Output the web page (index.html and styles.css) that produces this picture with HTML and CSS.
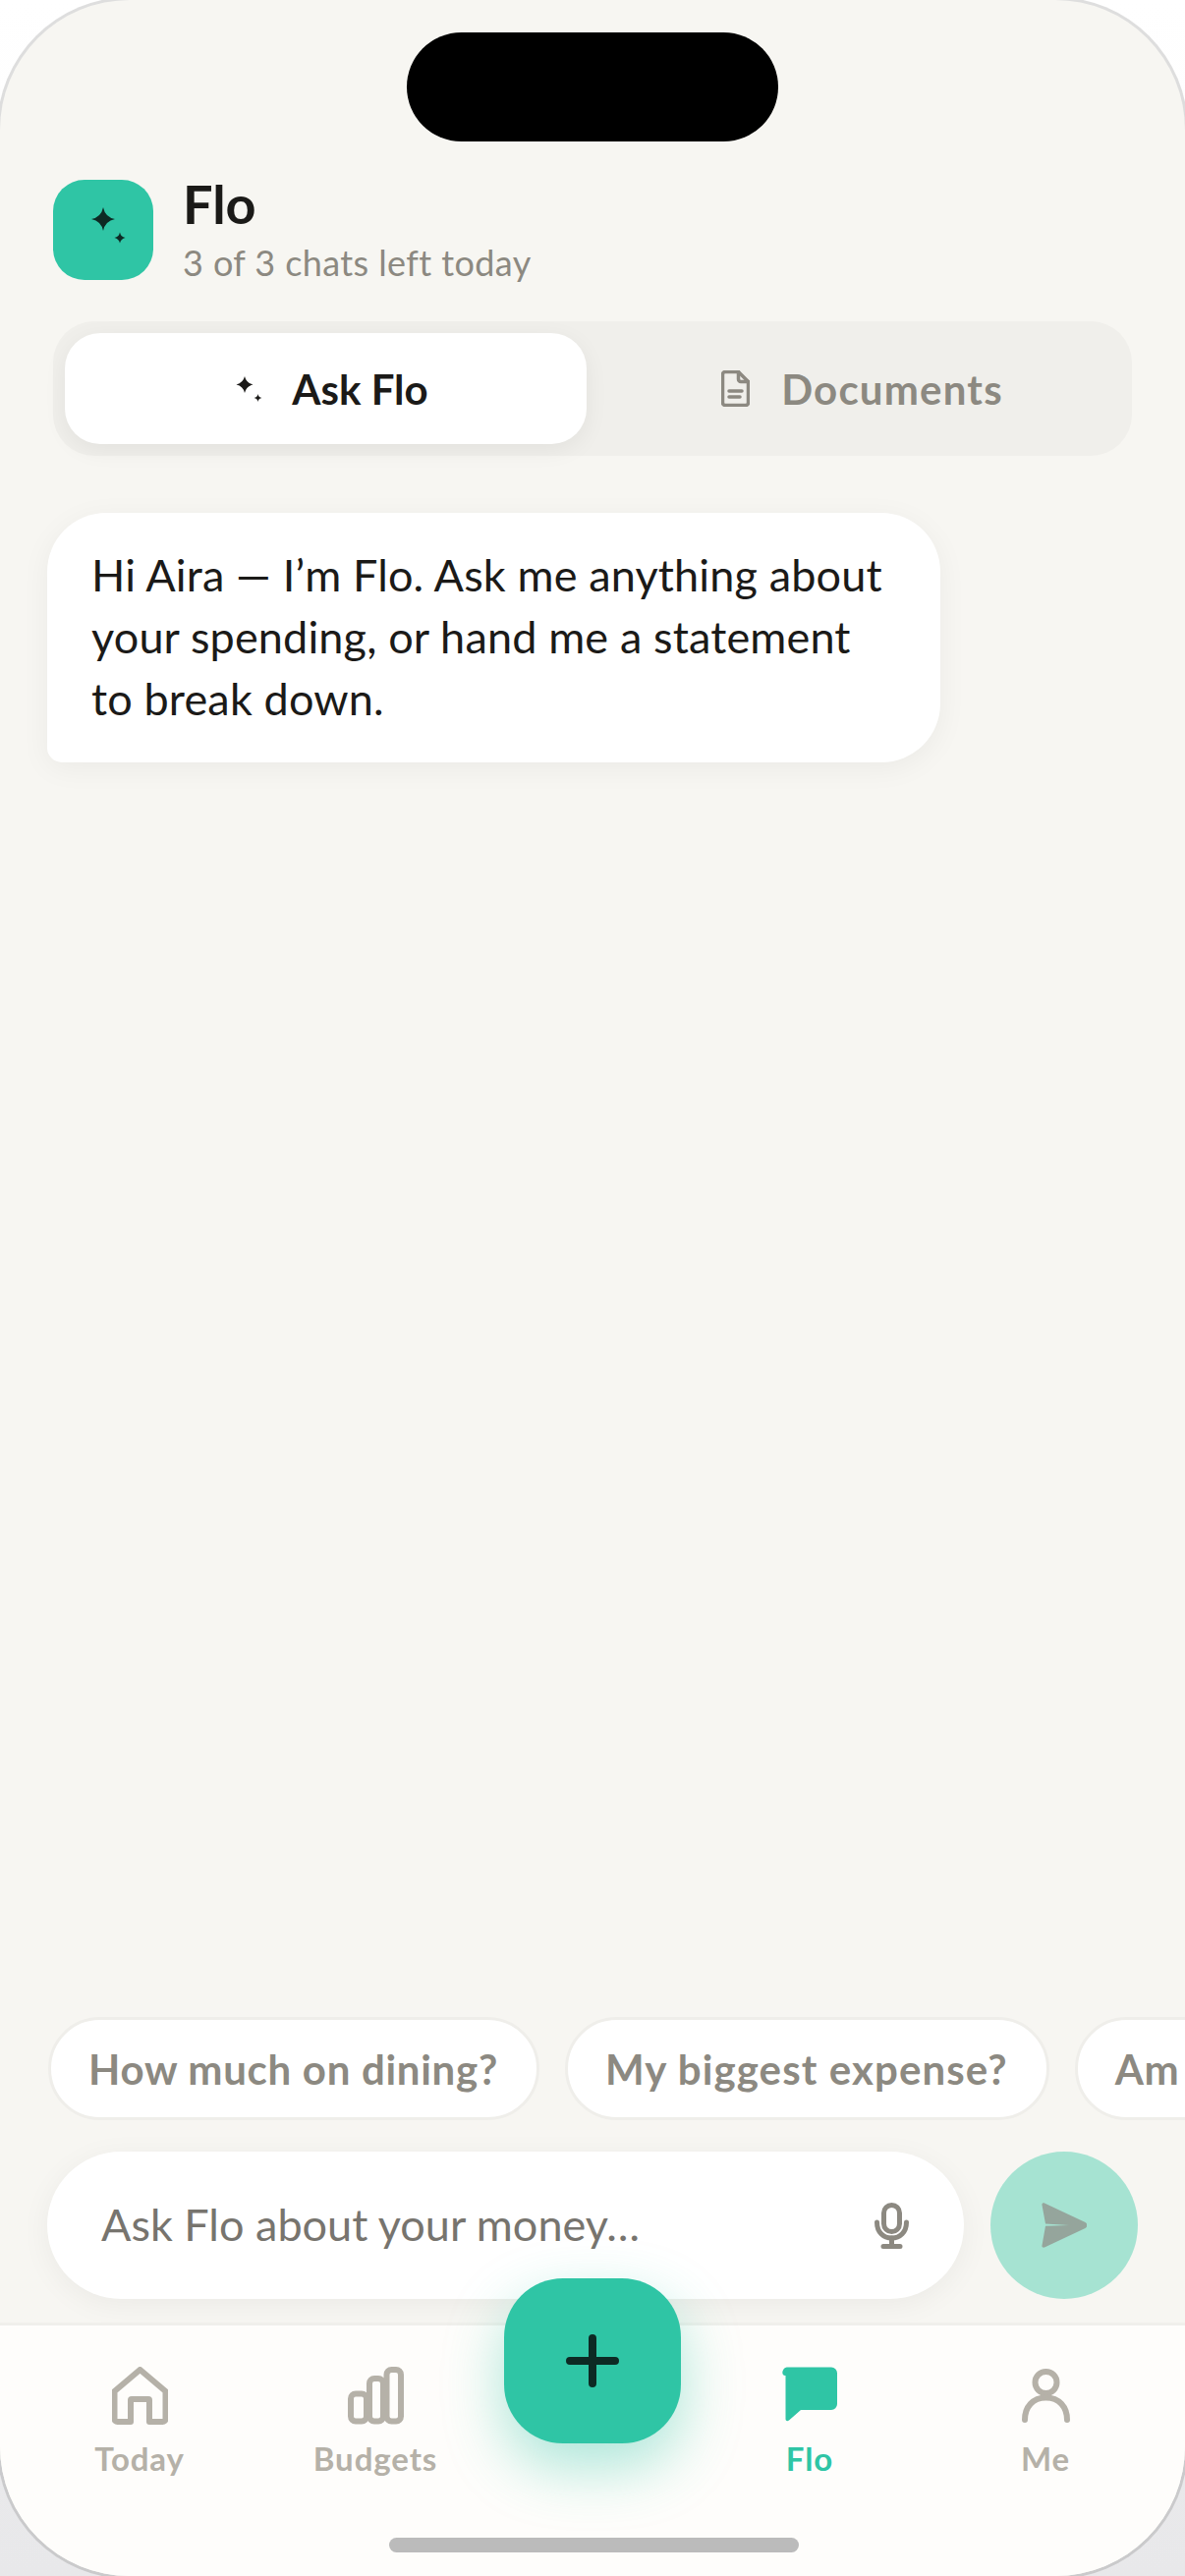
FILE: index.html
```html
<!DOCTYPE html>
<html lang="en">
<head>
<meta charset="utf-8">
<title>Flo</title>
<link rel="stylesheet" href="styles.css">
</head>
<body>
<div class="screen">
  <div class="island"></div>
  <header class="header">
    <div class="logo">
      <svg class="logo-icon" viewBox="0 0 102 102"><path d="M51 28 Q53 38 63 40 Q53 42 51 52 Q49 42 39 40 Q49 38 51 28Z"/><path d="M68 53.500 Q69 58 73.500 59 Q69 60 68 64.500 Q67 60 62.500 59 Q67 58 68 53.500Z"/></svg>
    </div>
    <div class="titles">
      <h1 class="title">Flo</h1>
      <p class="subtitle">3 of 3 chats left today</p>
    </div>
  </header>

  <div class="tabs">
    <div class="tab tab-active">
      <svg class="tab-spark" viewBox="0 0 26 26"><path d="M8 0 Q9.500 6.500 16.500 8.500 Q9.500 10 8 17 Q6.500 10 -0.500 8.500 Q6.500 6.500 8 0Z"/><path d="M21.500 18 Q22 21.500 25.500 22 Q22 22.500 21.500 26 Q21 22.500 17.500 22 Q21 21.500 21.500 18Z"/></svg>
      <span>Ask Flo</span>
    </div>
    <div class="tab tab-idle">
      <svg class="tab-doc" viewBox="0 0 29 37"><path d="M4 1.500 H17.500 L27.500 11.500 V33 A2.500 2.500 0 0 1 25 35.500 H4 A2.500 2.500 0 0 1 1.500 33 V4 A2.500 2.500 0 0 1 4 1.500Z"/><path d="M17.500 1.500 V9 A2.500 2.500 0 0 0 20 11.500 H27.500"/><path d="M8 21 H21 M8 27 H19"/></svg>
      <span>Documents</span>
    </div>
  </div>

  <main class="chat">
    <div class="bubble">Hi Aira — I’m Flo. Ask me anything about your spending, or hand me a statement to break down.</div>
  </main>

  <div class="chips">
    <div class="chip">How much on dining?</div>
    <div class="chip chip-wide">My biggest expense?</div>
    <div class="chip">Am I on track?</div>
  </div>

  <div class="composer">
    <div class="input">
      <span class="placeholder">Ask Flo about your money…</span>
      <svg class="mic" viewBox="0 0 35 47"><rect x="9.500" y="2.500" width="16" height="27" rx="8"/><path d="M2.500 20 C2.500 30 9 36 17.500 36 C26 36 32.500 30 32.500 20"/><path d="M17.500 36 V44.500 M9 44.500 H26"/></svg>
    </div>
    <div class="send">
      <svg class="send-icon" viewBox="0 0 46 46"><path d="M3 0.500 L44.500 20 C47 21.500 47 24.500 44.500 26 L3 45.500 C1.500 46 0 45 0.500 43.500 L4 23.800 L28 23 L4 21.500 L0.500 2.500 C0 1 1.500 0 3 0.500Z"/></svg>
    </div>
  </div>

  <nav class="nav">
    <div class="nav-item">
      <svg class="nav-icon" viewBox="0 0 57 59"><path d="M28.500 3 L54.500 25 V53 A3 3 0 0 1 51.500 56 H38 V34 A1 1 0 0 0 37 33 H20 A1 1 0 0 0 19 34 V56 H5.500 A3 3 0 0 1 2.500 53 V25Z"/></svg>
      <span>Today</span>
    </div>
    <div class="nav-item">
      <svg class="nav-icon" viewBox="0 0 57 59"><rect x="3" y="27.500" width="16" height="28" rx="5"/><rect x="22" y="12" width="14" height="43.500" rx="5"/><rect x="39.500" y="3" width="14.500" height="52.500" rx="5"/></svg>
      <span>Budgets</span>
    </div>
    <div class="nav-gap"></div>
    <div class="nav-item nav-item-active">
      <svg class="nav-icon" viewBox="0 0 57 59"><path d="M6 0.500 H50 A6 6 0 0 1 56 6.500 V38 A6 6 0 0 1 50 44 H19 L7 54.500 C5 56 3.500 55 3.500 53 V9 H3 C0 9 -0.500 5 1.500 2.500 C2.500 1 4 0.500 6 0.500Z"/></svg>
      <span>Flo</span>
    </div>
    <div class="nav-item">
      <svg class="nav-icon" viewBox="0 0 57 59"><circle cx="28.500" cy="16" r="11"/><path d="M7 54 C7 41 15 31.500 28.500 31.500 C42 31.500 50 41 50 54"/></svg>
      <span>Me</span>
    </div>
  </nav>

  <div class="fab">
    <svg class="fab-plus" viewBox="0 0 54 54"><path d="M27 4 V50 M4 27 H50"/></svg>
  </div>
  <div class="home-bar"></div>
</div>
</body>
</html>
```

FILE: styles.css
```css
* { box-sizing: border-box; }
html, body { margin: 0; padding: 0; }
body {
  width: 1206px;
  height: 2622px;
  overflow: hidden;
  background: linear-gradient(180deg, #ffffff 0%, #e8e8ea 100%);
  font-family: "Lato", "Open Sans", sans-serif;
  color: #1b1a18;
}
.screen {
  position: relative;
  width: 1206px;
  height: 2622px;
  display: flex;
  flex-direction: column;
  background: #f7f6f2;
  box-shadow: 0 0 0 3px rgba(0,0,0,.13);
  border-radius: 132px;
  overflow: hidden;
  padding-top: 183px;
}
.island {
  position: absolute;
  top: 33px;
  left: 414px;
  width: 378px;
  height: 111px;
  border-radius: 56px;
  background: #000;
}
.header { display: flex; align-items: flex-start; gap: 30px; padding: 0 54px; height: 102px; }
.logo {
  width: 102px; height: 102px; border-radius: 32px; background: #2fc5a5;
  flex: none;
}
.logo-icon { display: block; width: 102px; height: 102px; fill: #0d2a24; }
.titles { display: flex; flex-direction: column; }
.title { margin: 0; font-size: 54px; line-height: 50px; font-weight: 700; }
.subtitle { margin: 11px 0 0; font-size: 36px; line-height: 46px; letter-spacing: .4px; color: #8c8981; }
.tabs {
  margin: 42px 54px 0;
  padding: 12px;
  height: 137px;
  display: flex;
  gap: 12px;
  background: #f0efeb;
  border-radius: 42px;
}
.tab {
  flex: none;
  width: 531px;
  display: flex; align-items: center; justify-content: center; gap: 30px;
  font-size: 42px; font-weight: 700; color: #8c8981;
  border-radius: 36px;
}
.tab-active { background: #fff; color: #1b1a18; box-shadow: 0 6px 24px rgba(0,0,0,.06); padding-left: 14px; }
.tab-idle { gap: 32px; letter-spacing: 1.200px; padding-left: 6px; }
.tab-spark { width: 26px; height: 26px; fill: #1b1a18; overflow: visible; }
.tab-doc { width: 29px; height: 37px; fill: none; stroke: #8c8981; stroke-width: 3.500; stroke-linejoin: round; stroke-linecap: round; }
.chat { flex: 1; padding: 58px 48px 0; }
.bubble {
  width: 909px;
  padding: 32px 45px 33px;
  background: #fff;
  border-radius: 60px 60px 60px 15px;
  font-size: 45px;
  line-height: 63px;
  letter-spacing: .15px;
  box-shadow: 0 6px 30px rgba(0,0,0,.05);
}
.chips { display: flex; gap: 26px; padding: 0 49px; white-space: nowrap; }
.chip {
  flex: none;
  height: 105px;
  padding: 0 39px 0 38px;
  display: flex; align-items: center;
  background: #fff;
  border: 3px solid #efeeea;
  border-radius: 53px;
  font-size: 42px; font-weight: 700; letter-spacing: .7px; color: #8c8981;
}
.chip-wide { letter-spacing: 1.100px; }
.composer { display: flex; gap: 27px; padding: 32px 48px 0; height: 206px; }
.input {
  width: 933px; height: 150px; border-radius: 75px; background: #fff;
  display: flex; align-items: center; justify-content: space-between;
  padding: 0 56px 2px 55px;
  box-shadow: 0 6px 30px rgba(0,0,0,.05);
}
.placeholder { font-size: 45px; color: #77746e; }
.mic { width: 35px; height: 47px; margin-top: 2px; fill: none; stroke: #8c8981; stroke-width: 5; stroke-linecap: round; }
.send {
  width: 150px; height: 150px; border-radius: 50%; background: #a6e3d2;
  display: flex; align-items: center; justify-content: center;
}
.send-icon { width: 46px; height: 46px; fill: #95a59c; }
.nav {
  flex: none;
  height: 258px;
  display: grid;
  grid-template-columns: 240px 240px 1fr 240px 240px;
  padding: 0 22px;
  background: #fefdfb;
  border-top: 3px solid #f0efeb;
}
.nav-item {
  display: flex; flex-direction: column; align-items: center;
  padding-top: 42px;
  font-size: 33px; line-height: 46px; font-weight: 700; letter-spacing: .9px; color: #b5b1a8;
}
.nav-item span { margin-top: 11px; }
.nav-icon { width: 57px; height: 59px; fill: none; stroke: #b5b1a8; stroke-width: 6; stroke-linejoin: round; stroke-linecap: round; }
.nav-item-active { color: #2fc5a5; }
.nav-item-active .nav-icon { fill: #2fc5a5; stroke: none; }
.fab {
  position: absolute;
  top: 2319px;
  left: 513px;
  width: 180px;
  height: 168px;
  border-radius: 60px;
  background: #2fc5a5;
  box-shadow: 0 24px 60px rgba(47,197,165,.4);
  display: flex; align-items: center; justify-content: center;
}
.fab-plus { width: 54px; height: 54px; fill: none; stroke: #0d2a24; stroke-width: 8; stroke-linecap: round; }
.home-bar {
  position: absolute;
  left: 396px;
  top: 2583px;
  width: 417px;
  height: 15px;
  border-radius: 8px;
  background: #bbb;
}
```
